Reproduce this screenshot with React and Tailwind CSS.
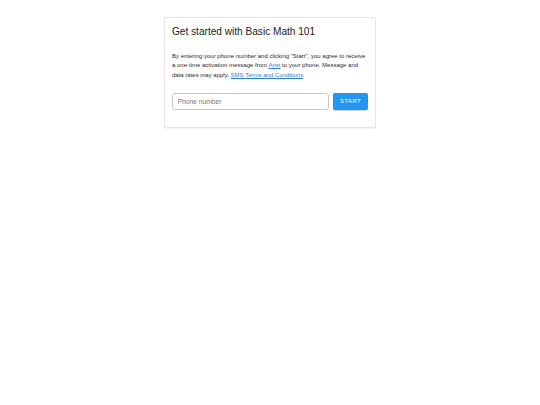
export default function App() {
  return (
    <div className="min-h-[405px] w-[540px] bg-white" style={{ fontFamily: '"Liberation Sans", Arial, sans-serif' }}>
      <div className="pt-[17px] pl-[164px]">
        <div className="w-[212px] rounded-[2px] border border-[#e6e6e6] bg-white px-[7px] pt-[6.5px] pb-[17px] shadow-[0_0.5px_1px_rgba(0,0,0,0.06)]">
          <h1 className="text-[10.1px] leading-[14px] text-[#222] font-normal">Get started with Basic Math 101</h1>
          <p className="mt-[13px] text-[6px] leading-[9.5px] text-[#2b2b2b]">
            By entering your phone number and clicking "Start", you agree to receive a one-time activation message from{' '}
            <a className="text-[#2a7ae2] underline">Arist</a> to your phone. Message and data rates may apply.{' '}
            <a className="text-[#2a7ae2] underline">SMS Terms and Conditions</a>
          </p>
          <div className="mt-[12.5px] flex items-center gap-[4px]">
            <input
              placeholder="Phone number"
              className="h-[17px] w-[158px] rounded-[3px] border border-[#c8c8c8] px-[4.5px] text-[6.7px] text-[#333] placeholder:text-[#777] outline-none"
            />
            <button className="flex h-[17px] w-[35px] items-center justify-center rounded-[2px] bg-[#2196f3] text-[5.8px] tracking-[0.5px] text-white shadow-[0_0.5px_1px_rgba(0,0,0,0.2)]">
              START
            </button>
          </div>
        </div>
      </div>
    </div>
  );
}
